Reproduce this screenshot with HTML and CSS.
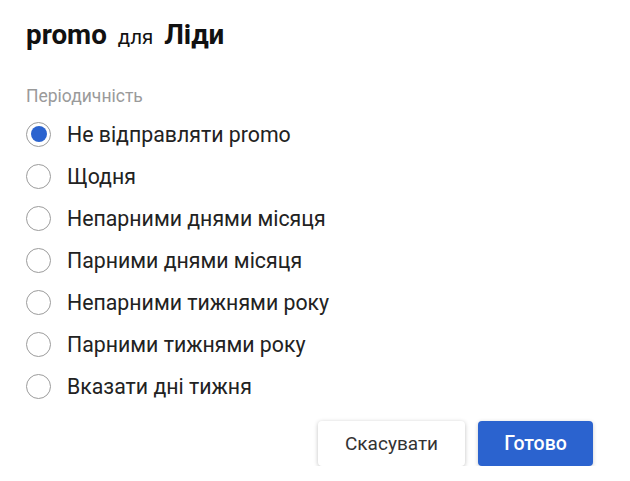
FILE: index.html
```html
<!DOCTYPE html>
<html>
<head>
<meta charset="utf-8">
<link rel="stylesheet" href="styles.css">
</head>
<body>
<div class="dialog">
  <h1 class="title"><span class="strong">promo</span> <span class="light">для</span> <span class="strong">Ліди</span></h1>
  <div class="label">Періодичність</div>
  <div class="options">
    <label class="opt"><span class="radio checked"></span><span>Не відправляти promo</span></label>
    <label class="opt"><span class="radio"></span><span>Щодня</span></label>
    <label class="opt"><span class="radio"></span><span>Непарними днями місяця</span></label>
    <label class="opt"><span class="radio"></span><span>Парними днями місяця</span></label>
    <label class="opt"><span class="radio"></span><span>Непарними тижнями року</span></label>
    <label class="opt"><span class="radio"></span><span>Парними тижнями року</span></label>
    <label class="opt"><span class="radio"></span><span>Вказати дні тижня</span></label>
  </div>
  <div class="actions">
    <button class="btn cancel">Скасувати</button>
    <button class="btn primary">Готово</button>
  </div>
</div>
</body>
</html>
```
FILE: styles.css
```css
html, body { margin: 0; padding: 0; background: #fff; }
body { font-family: Roboto, "Noto Sans", sans-serif; color: #222; }
.dialog { padding: 18px 37px 0 26px; }
.title { margin: 0; font-size: 27.8px; line-height: 34px; font-weight: 400; color: #111; }
.title .strong { font-weight: 700; }
.title .light { font-size: 20.5px; margin: 0 4px; }
.label { margin-top: 31px; font-size: 17.5px; line-height: 22px; color: #9a9a9a; }
.options { margin-top: 6px; display: flex; flex-direction: column; }
.opt { display: flex; align-items: center; height: 42px; font-size: 21.3px; color: #222; }
.radio { width: 23px; height: 23px; border: 1px solid #9c9c9c; border-radius: 50%; box-sizing: content-box; margin-right: 16px; display: flex; align-items: center; justify-content: center; flex: none; }
.radio.checked::after { content: ""; width: 16px; height: 16px; border-radius: 50%; background: #2b63cf; }
.actions { display: flex; justify-content: flex-end; gap: 13px; margin-top: 14px; }
.btn { height: 45px; border-radius: 4px; font-family: Roboto, sans-serif; font-size: 19px; border: none; padding: 0; }
.cancel { width: 147px; background: #fff; color: #333; box-shadow: 0 1px 4px rgba(0,0,0,0.25); }
.primary { width: 115px; background: #2b63cf; color: #fff; font-weight: 500; font-size: 19.5px; box-shadow: 0 1px 4px rgba(0,0,0,0.2); }
```
